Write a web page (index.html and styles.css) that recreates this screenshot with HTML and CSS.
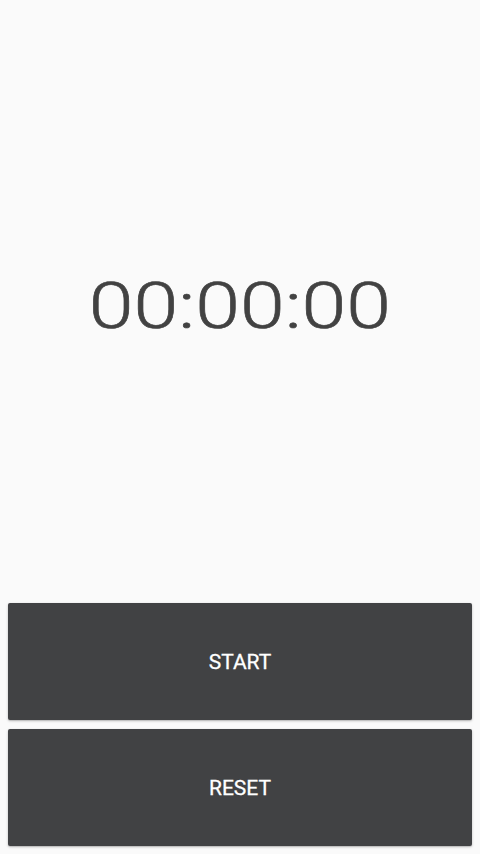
FILE: index.html
```html
<!DOCTYPE html>
<html>
<head>
<meta charset="utf-8">
<link rel="stylesheet" href="styles.css">
</head>
<body>
<div class="app">
  <div class="display">
    <span class="time">00:00:00</span>
  </div>
  <div class="controls">
    <button class="btn">START</button>
    <button class="btn">RESET</button>
  </div>
</div>
</body>
</html>
```
FILE: styles.css
```css
html, body {
  margin: 0;
  padding: 0;
  background: #fafafa;
}
.app {
  width: 480px;
  height: 854px;
  display: flex;
  flex-direction: column;
  font-family: Roboto, "Liberation Sans", sans-serif;
}
.display {
  flex: 1;
  display: flex;
  align-items: center;
  justify-content: center;
  padding-top: 11px;
}
.time {
  display: inline-block;
  font-size: 64px;
  line-height: 1;
  font-weight: 300;
  color: #424242;
  transform: scaleX(1.26);
  -webkit-text-stroke: 0.6px #424242;
}
.controls {
  display: flex;
  flex-direction: column;
  gap: 9px;
  padding: 0 8px 8px;
}
.btn {
  height: 117px;
  border: none;
  border-radius: 2px;
  background: #414244;
  color: #ffffff;
  font-family: Roboto, "Liberation Sans", sans-serif;
  font-size: 21px;
  font-weight: 400;
  -webkit-text-stroke: 0.3px #ffffff;
  box-shadow: 0 1px 3px rgba(0,0,0,0.2), 0 1px 1px rgba(0,0,0,0.12);
  padding: 0;
}
```
